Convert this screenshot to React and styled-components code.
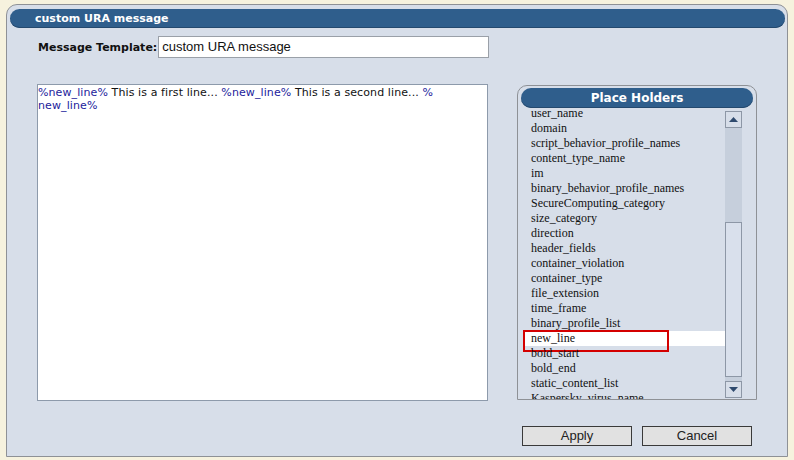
import React from "react";
import styled, { createGlobalStyle } from "styled-components";

const Global = createGlobalStyle`
  html, body { margin: 0; padding: 0; background: #f6f2de; }
  body { width: 794px; height: 460px; overflow: hidden; font-family: "DejaVu Sans", Verdana, sans-serif; }
  * { box-sizing: border-box; }
`;

const Page = styled.div`
  width: 794px;
  height: 460px;
  padding: 4px 0 0 6px;
`;

const Panel = styled.div`
  width: 782px;
  height: 453px;
  background: #d7dee9;
  border: 1px solid #8e9196;
  border-radius: 11px 11px 0 0;
  display: flex;
  flex-direction: column;
`;

const TitleBar = styled.div`
  margin: ${(p) => (p.$center ? "2px 3px 0 3px" : "4px 2px 0 3px")};
  height: ${(p) => p.$height || 19}px;
  border-radius: 10px;
  background: #2f5e8c;
  box-shadow: inset 0 -1px 0 #24496e;
  color: #fff;
  font-weight: bold;
  font-size: ${(p) => p.$size || 11}px;
  line-height: ${(p) => p.$height || 19}px;
  padding-left: ${(p) => (p.$center ? 0 : 25)}px;
  text-align: ${(p) => (p.$center ? "center" : "left")};
  flex-shrink: 0;
`;

const FormRow = styled.div`
  margin-top: 8px;
  padding-left: 31px;
  display: flex;
  align-items: center;
  gap: 1px;
`;

const Label = styled.span`
  font-weight: bold;
  font-size: 11px;
  color: #111;
`;

const TextInput = styled.div`
  width: 331px;
  height: 22px;
  background: #fff;
  border: 1px solid #9aa0a8;
  font-family: "Liberation Sans", Arial, sans-serif;
  font-size: 13px;
  line-height: 20px;
  padding-left: 3px;
  color: #111;
`;

const BodyRow = styled.div`
  margin-top: 26px;
  padding-left: 30px;
  display: flex;
  align-items: flex-start;
  gap: 29px;
`;

const Editor = styled.div`
  width: 451px;
  height: 317px;
  background: #fff;
  border: 1px solid #8d9aab;
  padding: 1px 0;
  font-family: "DejaVu Sans", Verdana, sans-serif;
  font-size: 11px;
  letter-spacing: 0.1px;
  line-height: 13px;
  color: #111;
`;

const Token = styled.span`
  color: #1c1c9c;
`;

const HolderBox = styled.div`
  margin-top: 1px;
  width: 240px;
  height: 315px;
  border: 1px solid #8e9196;
  border-radius: 10px 10px 0 0;
  display: flex;
  flex-direction: column;
  overflow: hidden;
`;

const ListArea = styled.div`
  display: flex;
  flex: 1;
  min-height: 0;
  padding-left: 5px;
`;

const List = styled.div`
  width: 202px;
  margin-top: 3px;
  height: calc(100% - 3px);
  overflow: hidden;
`;

const Items = styled.div`
  margin-top: -5px;
`;

const Item = styled.div`
  position: relative;
  height: 15px;
  line-height: 15px;
  padding-left: 8px;
  font-family: "Liberation Serif", "Times New Roman", serif;
  font-size: 12px;
  color: #111;
  white-space: nowrap;
  background: ${(p) => (p.$selected ? "#fff" : "transparent")};
  &::after {
    content: "";
    display: ${(p) => (p.$selected ? "block" : "none")};
    position: absolute;
    left: 0;
    top: -1px;
    width: 142px;
    height: 18px;
    border: 2px solid #d40000;
  }
`;

const ScrollBar = styled.div`
  width: 17px;
  margin-top: 3px;
  height: 287px;
  display: flex;
  flex-direction: column;
`;

const ScrollBtn = styled.div`
  height: 17px;
  flex-shrink: 0;
  border: 1px solid #8d97a6;
  background: #d7dee9;
  display: flex;
  align-items: center;
  justify-content: center;
`;

const Track = styled.div`
  flex: 1;
  background: #c6cfdc;
  display: flex;
  flex-direction: column;
  padding-top: 94px;
  padding-bottom: 4px;
`;

const Thumb = styled.div`
  flex: 1;
  background: #d9e0ec;
  border: 1px solid #8d97a6;
`;

const ButtonRow = styled.div`
  margin-top: 25px;
  padding-left: 515px;
  display: flex;
  gap: 10px;
`;

const Button = styled.button`
  width: 110px;
  height: 20px;
  background: #e1e1e1;
  border: 1px solid #3a3a3a;
  font-family: "Liberation Sans", Arial, sans-serif;
  font-size: 13px;
  color: #222;
  padding: 0;
  line-height: 18px;
`;

const Arrow = ({ down }) => (
  <svg width="9" height="5" viewBox="0 0 9 5">
    <path d={down ? "M0 0 H9 L4.5 5 Z" : "M4.5 0 L9 5 H0 Z"} fill="#2e4a6e" />
  </svg>
);

const items = [
  "user_name",
  "domain",
  "script_behavior_profile_names",
  "content_type_name",
  "im",
  "binary_behavior_profile_names",
  "SecureComputing_category",
  "size_category",
  "direction",
  "header_fields",
  "container_violation",
  "container_type",
  "file_extension",
  "time_frame",
  "binary_profile_list",
  "new_line",
  "bold_start",
  "bold_end",
  "static_content_list",
  "Kaspersky_virus_name",
];

export default function App() {
  return (
    <Page>
      <Global />
      <Panel>
        <TitleBar>custom URA message</TitleBar>
        <FormRow>
          <Label>Message Template:</Label>
          <TextInput>custom URA message</TextInput>
        </FormRow>
        <BodyRow>
          <Editor>
            <Token>%new_line%</Token> This is a first line... <Token>%new_line%</Token> This is a second line... <Token>%</Token>
            <br />
            <Token>new_line%</Token>
          </Editor>
          <HolderBox>
            <TitleBar $center $size={12} $height={20}>Place Holders</TitleBar>
            <ListArea>
              <List>
                <Items>
                  {items.map((it) => (
                    <Item key={it} $selected={it === "new_line"}>{it}</Item>
                  ))}
                </Items>
              </List>
              <ScrollBar>
                <ScrollBtn><Arrow /></ScrollBtn>
                <Track><Thumb /></Track>
                <ScrollBtn><Arrow down /></ScrollBtn>
              </ScrollBar>
            </ListArea>
          </HolderBox>
        </BodyRow>
        <ButtonRow>
          <Button>Apply</Button>
          <Button>Cancel</Button>
        </ButtonRow>
      </Panel>
    </Page>
  );
}
